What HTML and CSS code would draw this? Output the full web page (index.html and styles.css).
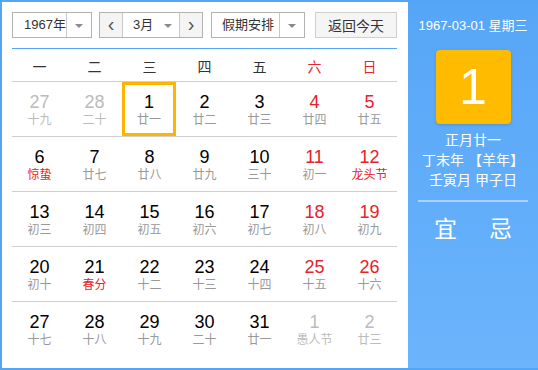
FILE: index.html
```html
<!DOCTYPE html>
<html lang="zh-CN">
<head>
    <meta charset="UTF-8">
    <meta name="viewport" content="width=device-width, initial-scale=1.0">
    <title>万年历</title>
    <link rel="stylesheet" href="styles.css">
</head>
<body>

    <div class="calendar">
        <!-- 左侧：月历 -->
        <div class="main">
            <div class="toolbar">
                <div class="select year-select">
                    <span class="select-text">1967年</span>
                    <span class="select-arrow"></span>
                </div>
                <div class="select month-select">
                    <span class="step">&lsaquo;</span>
                    <span class="select-text">3月</span>
                    <span class="arrow-plain"></span>
                    <span class="step">&rsaquo;</span>
                </div>
                <div class="select holiday-select">
                    <span class="select-text">假期安排</span>
                    <span class="select-arrow"></span>
                </div>
                <button class="today-btn">返回今天</button>
            </div>

            <div class="week-head">
                <span>一</span><span>二</span><span>三</span><span>四</span><span>五</span>
                <span class="weekend">六</span><span class="weekend">日</span>
            </div>

            <div class="days">
                <div class="week">
                    <div class="day other"><b>27</b><i>十九</i></div>
                    <div class="day other"><b>28</b><i>二十</i></div>
                    <div class="day selected"><b>1</b><i>廿一</i></div>
                    <div class="day"><b>2</b><i>廿二</i></div>
                    <div class="day"><b>3</b><i>廿三</i></div>
                    <div class="day weekend"><b>4</b><i>廿四</i></div>
                    <div class="day weekend"><b>5</b><i>廿五</i></div>
                </div>
                <div class="week">
                    <div class="day"><b>6</b><i class="festival">惊蛰</i></div>
                    <div class="day"><b>7</b><i>廿七</i></div>
                    <div class="day"><b>8</b><i>廿八</i></div>
                    <div class="day"><b>9</b><i>廿九</i></div>
                    <div class="day"><b>10</b><i>三十</i></div>
                    <div class="day weekend"><b>11</b><i>初一</i></div>
                    <div class="day weekend"><b>12</b><i class="festival">龙头节</i></div>
                </div>
                <div class="week">
                    <div class="day"><b>13</b><i>初三</i></div>
                    <div class="day"><b>14</b><i>初四</i></div>
                    <div class="day"><b>15</b><i>初五</i></div>
                    <div class="day"><b>16</b><i>初六</i></div>
                    <div class="day"><b>17</b><i>初七</i></div>
                    <div class="day weekend"><b>18</b><i>初八</i></div>
                    <div class="day weekend"><b>19</b><i>初九</i></div>
                </div>
                <div class="week">
                    <div class="day"><b>20</b><i>初十</i></div>
                    <div class="day"><b>21</b><i class="festival">春分</i></div>
                    <div class="day"><b>22</b><i>十二</i></div>
                    <div class="day"><b>23</b><i>十三</i></div>
                    <div class="day"><b>24</b><i>十四</i></div>
                    <div class="day weekend"><b>25</b><i>十五</i></div>
                    <div class="day weekend"><b>26</b><i>十六</i></div>
                </div>
                <div class="week last">
                    <div class="day"><b>27</b><i>十七</i></div>
                    <div class="day"><b>28</b><i>十八</i></div>
                    <div class="day"><b>29</b><i>十九</i></div>
                    <div class="day"><b>30</b><i>二十</i></div>
                    <div class="day"><b>31</b><i>廿一</i></div>
                    <div class="day other"><b>1</b><i>愚人节</i></div>
                    <div class="day other"><b>2</b><i>廿三</i></div>
                </div>
            </div>
        </div>

        <!-- 右侧：当日详情 -->
        <div class="side">
            <div class="side-date">1967-03-01 星期三</div>
            <div class="side-day">1</div>
            <div class="side-lunar">
                <p>正月廿一</p>
                <p>丁末年 【羊年】</p>
                <p>壬寅月 甲子日</p>
            </div>
            <div class="side-yiji">
                <span>宜</span>
                <span>忌</span>
            </div>
        </div>
    </div>

</body>
</html>
```

FILE: styles.css
```css
body {
    margin: 0;
    font-family: "Liberation Sans", "Noto Sans CJK SC", sans-serif;
}

.calendar {
    display: flex;
    width: 538px;
    height: 370px;
    box-sizing: border-box;
    padding: 2px 0 2px 2px;
    background-color: #55a5f7;
}

/* 左侧月历 */
.main {
    width: 406px;
    background-color: #fff;
    padding: 10px 0 0 10px;
    box-sizing: border-box;
}

.toolbar {
    display: flex;
    width: 385px;
    height: 36px;
    border-bottom: 1px solid #55a5f7;
    align-items: flex-start;
}

.select {
    display: flex;
    height: 26px;
    box-sizing: border-box;
    border: 1px solid #b3b3b3;
    font-size: 13px;
    color: #333;
    line-height: 24px;
    background-color: #fff;
}

.select-text {
    flex: 1;
    padding-left: 11px;
}

.select-arrow,
.arrow-plain {
    position: relative;
    width: 24px;
}

.select-arrow {
    border-left: 1px solid #c8c8c8;
}

.select-arrow::after,
.arrow-plain::after {
    content: "";
    position: absolute;
    left: 50%;
    top: 11px;
    margin-left: -4px;
    border-left: 4px solid transparent;
    border-right: 4px solid transparent;
    border-top: 4px solid #8a8a8a;
}

.arrow-plain {
    width: 22px;
}

.year-select {
    width: 80px;
    margin-right: 7px;
}

.month-select {
    width: 104px;
    margin-right: 8px;
}

.month-select .select-text {
    padding-left: 10px;
}

.step {
    width: 22px;
    text-align: center;
    background-color: #f4f4f4;
    color: #555;
    font-size: 20px;
    line-height: 22px;
}

.step:first-child {
    border-right: 1px solid #c8c8c8;
}

.step:last-child {
    border-left: 1px solid #c8c8c8;
}

.holiday-select {
    width: 94px;
    margin-right: 10px;
}

.holiday-select .select-text {
    padding-left: 10px;
}

.today-btn {
    width: 82px;
    height: 26px;
    margin: 0;
    padding: 0;
    border: 1px solid #cfcfcf;
    background-color: #f5f5f5;
    font-family: "Liberation Sans", "Noto Sans CJK SC", sans-serif;
    font-size: 14px;
    color: #333;
}

.week-head {
    display: grid;
    grid-template-columns: repeat(7, 55px);
    height: 33px;
    border-bottom: 1px solid #cfcfcf;
    font-size: 14px;
    color: #333;
    text-align: center;
    line-height: 29px;
    padding-top: 4px;
    box-sizing: border-box;
    width: 385px;
}

.week-head .weekend {
    color: #e8262d;
}

.week {
    display: grid;
    grid-template-columns: repeat(7, 55px);
    width: 385px;
    border-bottom: 1px solid #cfcfcf;
}

.week.last {
    border-bottom: none;
}

.day {
    height: 54px;
    box-sizing: border-box;
    padding-top: 10px;
    text-align: center;
}

.day b {
    display: block;
    font-weight: normal;
    font-size: 18px;
    line-height: 20px;
    color: #000;
}

.day i {
    display: block;
    font-style: normal;
    font-size: 12px;
    line-height: 16px;
    color: #999;
}

.day.weekend b {
    color: #e8212b;
}

.day i.festival {
    color: #e8212b;
}

.day.other b,
.day.other i {
    color: #bbb;
}

.day.selected {
    border: 3px solid #ffb400;
    padding-top: 7px;
    width: 54px;
}

/* 右侧详情 */
.side {
    flex: 1;
    background: linear-gradient(#56a6f7, #6cb4fc);
    color: #fff;
    text-align: center;
    padding-top: 14px;
}

.side-date {
    font-size: 13px;
    line-height: 20px;
}

.side-day {
    width: 75px;
    height: 74px;
    margin: 14px auto 0;
    border-radius: 4px;
    background-color: #ffbb00;
    box-shadow: 0 1px 3px rgba(0, 0, 0, 0.15);
    font-size: 50px;
    line-height: 74px;
}

.side-lunar {
    margin-top: 6px;
    font-size: 14px;
    line-height: 20px;
}

.side-lunar p {
    margin: 0;
}

.side-yiji {
    display: flex;
    justify-content: center;
    margin: 10px 10px 0;
    border-top: 2px solid rgba(255, 255, 255, 0.45);
    padding-top: 13px;
    font-size: 23px;
    line-height: 28px;
}

.side-yiji span {
    width: 55px;
}
```
